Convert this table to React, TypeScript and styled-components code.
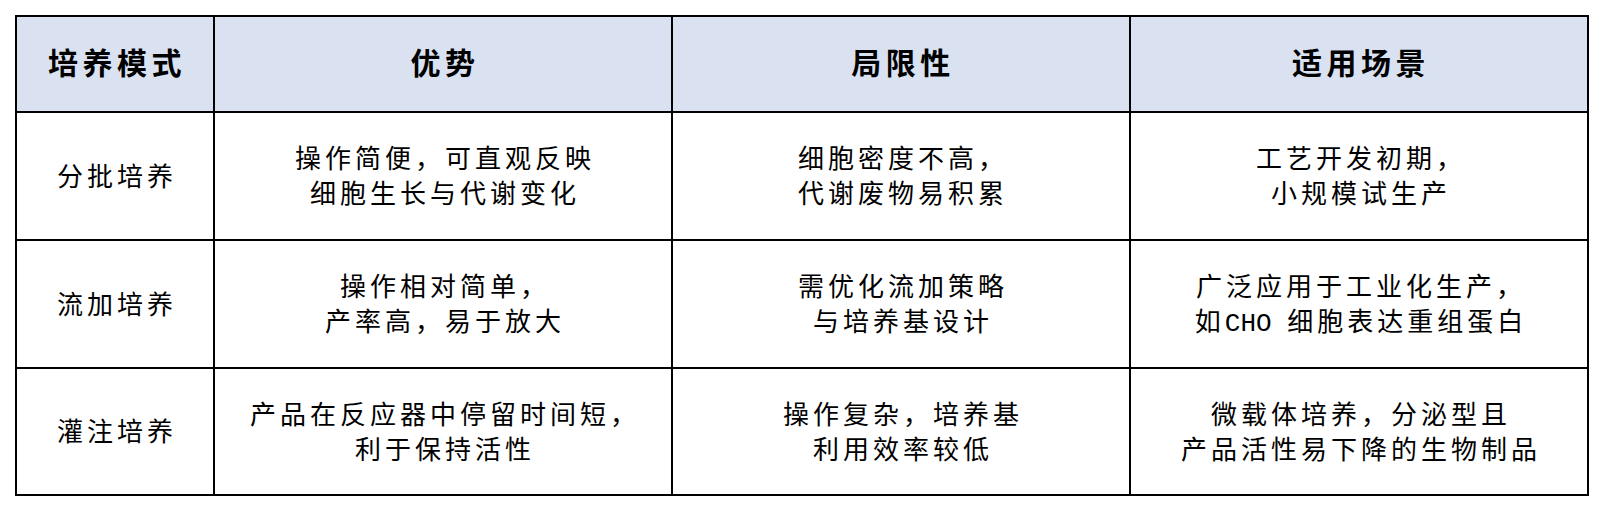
import React from "react";
import styled, { createGlobalStyle } from "styled-components";

const Global = createGlobalStyle`
  html, body { margin: 0; padding: 0; background: #ffffff; }
  body { font-family: "Liberation Mono", "Noto Sans CJK SC", sans-serif; color: #000; }
`;

const Page = styled.div`
  padding: 15px 0 0 15px;
  width: 1604px;
  height: 512px;
  box-sizing: border-box;
`;

const Table = styled.div`
  display: grid;
  grid-template-columns: 196px 456px 456px 456px;
  grid-template-rows: 94px 126px 126px 125px;
  gap: 2px;
  padding: 2px;
  background: #000;
  width: 1574px;
  box-sizing: border-box;
`;

const Cell = styled.div<{ $head?: boolean }>`
  display: flex;
  align-items: center;
  justify-content: center;
  flex-direction: column;
  text-align: center;
  box-sizing: border-box;
  padding-top: ${(p) => (p.$head ? "5px" : "6px")};
  background: ${(p) => (p.$head ? "#dae2f2" : "#ffffff")};
  font-family: "Liberation Mono", "Noto Sans CJK SC", sans-serif;
  font-size: ${(p) => (p.$head ? "30px" : "26px")};
  font-weight: ${(p) => (p.$head ? 700 : 400)};
  letter-spacing: ${(p) => (p.$head ? "4.5px" : "4px")};
  line-height: 35px;
  color: #000;
`;

const Line = styled.span`
  display: block;
  white-space: pre;
  margin-right: -4px;
`;

const Latin = styled.span`
  letter-spacing: 0;
`;

const headers = ["培养模式", "优势", "局限性", "适用场景"];

type Content = React.ReactNode[];

const rows: Content[][] = [
  [
    ["分批培养"],
    ["操作简便，可直观反映", "细胞生长与代谢变化"],
    ["细胞密度不高，", "代谢废物易积累"],
    ["工艺开发初期，", "小规模试生产"],
  ],
  [
    ["流加培养"],
    ["操作相对简单，", "产率高，易于放大"],
    ["需优化流加策略", "与培养基设计"],
    [
      "广泛应用于工业化生产，",
      <>
        如<Latin>CHO </Latin>细胞表达重组蛋白
      </>,
    ],
  ],
  [
    ["灌注培养"],
    ["产品在反应器中停留时间短，", "利于保持活性"],
    ["操作复杂，培养基", "利用效率较低"],
    ["微载体培养，分泌型且", "产品活性易下降的生物制品"],
  ],
];

export default function App() {
  return (
    <>
      <Global />
      <Page>
        <Table>
          {headers.map((h) => (
            <Cell key={h} $head>
              <Line>{h}</Line>
            </Cell>
          ))}
          {rows.map((row, ri) =>
            row.map((cell, ci) => (
              <Cell key={`${ri}-${ci}`}>
                {cell.map((l, li) => (
                  <Line key={li}>{l}</Line>
                ))}
              </Cell>
            ))
          )}
        </Table>
      </Page>
    </>
  );
}
